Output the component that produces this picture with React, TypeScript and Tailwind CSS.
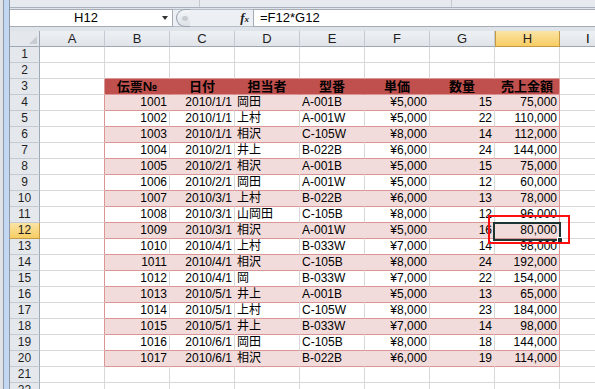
import React from "react";

type Row = [string, string, string, string, string, string, string];

const DATA: Row[] = [
  ["1001", "2010/1/1", "岡田", "A-001B", "¥5,000", "15", "75,000"],
  ["1002", "2010/1/1", "上村", "A-001W", "¥5,000", "22", "110,000"],
  ["1003", "2010/1/1", "相沢", "C-105W", "¥8,000", "14", "112,000"],
  ["1004", "2010/2/1", "井上", "B-022B", "¥6,000", "24", "144,000"],
  ["1005", "2010/2/1", "相沢", "A-001B", "¥5,000", "15", "75,000"],
  ["1006", "2010/2/1", "岡田", "A-001W", "¥5,000", "12", "60,000"],
  ["1007", "2010/3/1", "上村", "B-022B", "¥6,000", "13", "78,000"],
  ["1008", "2010/3/1", "山岡田", "C-105B", "¥8,000", "12", "96,000"],
  ["1009", "2010/3/1", "相沢", "A-001W", "¥5,000", "16", "80,000"],
  ["1010", "2010/4/1", "上村", "B-033W", "¥7,000", "14", "98,000"],
  ["1011", "2010/4/1", "相沢", "C-105B", "¥8,000", "24", "192,000"],
  ["1012", "2010/4/1", "岡", "B-033W", "¥7,000", "22", "154,000"],
  ["1013", "2010/5/1", "井上", "A-001B", "¥5,000", "13", "65,000"],
  ["1014", "2010/5/1", "上村", "C-105W", "¥8,000", "23", "184,000"],
  ["1015", "2010/5/1", "井上", "B-033W", "¥7,000", "14", "98,000"],
  ["1016", "2010/6/1", "岡田", "C-105B", "¥8,000", "18", "144,000"],
  ["1017", "2010/6/1", "相沢", "B-022B", "¥6,000", "19", "114,000"],
];

const HEADERS = ["伝票№", "日付", "担当者", "型番", "単価", "数量", "売上金額"];
const COLS = ["A", "B", "C", "D", "E", "F", "G", "H"];
// alignment for B..H data: right, right, left, left, right, right, right
const ALIGN = ["justify-end", "justify-end", "justify-start", "justify-start", "justify-end", "justify-end", "justify-end"];

function TableCell({ r, ci }: { r: number; ci: number }) {
  // ci: 0..6 for B..H
  const isHeader = r === 3;
  const pinkRow = r % 2 === 0;
  const isLast = ci === 6;
  let bg = "bg-white";
  let br = "border-r-[#d8d8d8]";
  if (isHeader) {
    bg = "bg-[#c0504d]";
    br = "border-r-[#c0504d]";
  } else if (pinkRow) {
    bg = "bg-[#f2dcdb]";
    br = "border-r-[#f2dcdb]";
  }
  if (isLast) br = "border-r-[#da9694]";
  const text = isHeader ? HEADERS[ci] : DATA[r - 4][ci];
  const align = isHeader ? "justify-center" : ALIGN[ci];
  return (
    <div
      className={`w-[65px] h-[16px] shrink-0 border-r border-b border-b-[#da9694] ${br} ${bg} flex items-end ${align} px-[2px] overflow-hidden`}
    >
      <span
        className={`whitespace-nowrap leading-[15px] ${isHeader ? "text-[13px] font-bold text-black" : "text-[12px] text-black"}`}
      >
        {text}
      </span>
    </div>
  );
}

function GridRow({ r }: { r: number }) {
  const selected = r === 12;
  const inTable = r >= 3 && r <= 20;
  return (
    <div className="flex h-[16px]">
      <div
        className={`w-[30px] h-[16px] shrink-0 border-b border-r flex items-end justify-center text-[12px] leading-[15px] ${
          selected
            ? "bg-gradient-to-b from-[#fbe4a4] to-[#f7cd62] border-b-[#c59a45] border-r-[#c59a45]"
            : "bg-[#e4e8ed] border-b-[#c4cad2] border-r-[#9ea8b5]"
        } text-[#1f1f1f]`}
      >
        {r}
      </div>
      <div
        className={`w-[65px] h-[16px] shrink-0 bg-white border-b border-b-[#d8d8d8] border-r ${
          inTable ? "border-r-[#da9694]" : "border-r-[#d8d8d8]"
        }`}
      />
      {Array.from({ length: 7 }).map((_, ci) =>
        inTable ? (
          <TableCell key={ci} r={r} ci={ci} />
        ) : (
          <div
            key={ci}
            className={`w-[65px] h-[16px] shrink-0 bg-white border-r border-b border-r-[#d8d8d8] ${
              r === 2 ? "border-b-[#da9694]" : "border-b-[#d8d8d8]"
            }`}
          />
        )
      )}
      <div className="flex-1 h-[16px] bg-white border-b border-b-[#d8d8d8]" />
    </div>
  );
}

export default function App() {
  const rows = Array.from({ length: 22 }, (_, i) => i + 1);
  return (
    <div className="w-[595px] h-[389px] overflow-hidden relative flex bg-[#dfe4ea] font-['Liberation_Sans','Noto_Sans_CJK_JP',sans-serif] text-black">
      {/* left chrome */}
      <div className="w-[10px] h-full shrink-0 flex">
        <div className="w-[3px] h-full bg-[#dfe3e8]" />
        <div className="w-[1px] h-full bg-[#8e99a8]" />
        <div className="w-[5px] h-full bg-[#c3d7f0]" />
        <div className="w-[1px] h-full bg-[#8e99a8]" />
      </div>
      <div className="flex-1 flex flex-col min-w-0">
        {/* top strip */}
        <div className="h-[8px] shrink-0 flex bg-[#e6eaef] border-b border-b-[#a9b1bc]">
          <div className="w-[190px] border-r border-r-[#c3c9d1]" />
          <div className="w-[252px] border-r border-r-[#c3c9d1]" />
          <div className="flex-1" />
        </div>
        {/* formula bar */}
        <div className="h-[23px] shrink-0 flex items-start pt-[1px] bg-[#dfe4ea]">
          <div className="w-[163px] h-[18px] bg-white border border-[#a5acb6] border-l-0 flex items-center">
            <div className="flex-1 text-center text-[13px] leading-[16px] pl-[4px]">H12</div>
            <div className="w-[14px] flex items-center justify-center">
              <div className="w-0 h-0 border-l-[3.5px] border-r-[3.5px] border-t-[4px] border-l-transparent border-r-transparent border-t-[#333]" />
            </div>
          </div>
          <div className="w-[80px] h-[18px] bg-[#eceff3] border-y border-[#b8bec7] flex items-center">
            <div className="w-[14px] h-[18px] ml-[3px] rounded-l-full border border-r-0 border-[#9aa3ae] bg-gradient-to-b from-[#f4f6f8] to-[#dde2e8] flex items-center justify-center">
              <div className="w-[6px] h-[5px] rounded-full bg-[#c8cdd3] ml-[2px]" />
            </div>
            <div className="flex-1" />
            <div className="mr-[4px] font-['Liberation_Serif',serif] italic font-bold text-[13px] leading-[14px] text-[#222]">
              f<span className="text-[9px]">x</span>
            </div>
          </div>
          <div className="flex-1 h-[18px] bg-white border border-[#a5acb6] border-r-0 flex items-center pl-[6px] text-[13px] leading-[16px]">
            =F12*G12
          </div>
        </div>
        {/* column headers */}
        <div className="flex h-[16px] shrink-0">
          <div className="w-[30px] h-[16px] bg-[#e4e8ed] border-b border-r border-b-[#9ea8b5] border-r-[#9ea8b5] relative">
            <div className="absolute right-[2px] bottom-[2px] w-0 h-0 border-l-[8px] border-t-[8px] border-l-transparent border-t-transparent border-r-0 border-b-0" style={{}} />
            <div className="absolute right-[2px] bottom-[2px] w-0 h-0 border-b-[8px] border-l-[8px] border-b-[#c7ccd3] border-l-transparent" />
          </div>
          {COLS.map((c) => (
            <div
              key={c}
              className={`w-[65px] h-[16px] shrink-0 border-b border-r flex items-end justify-center text-[13px] leading-[15px] ${
                c === "H"
                  ? "bg-gradient-to-b from-[#fbe4a4] to-[#f7cd62] border-b-[#c59a45] border-r-[#c59a45] border-l border-l-[#c59a45]"
                  : "bg-gradient-to-b from-[#eef1f4] to-[#e0e4e9] border-b-[#9ea8b5] border-r-[#c4cad2]"
              } text-[#1f1f1f]`}
            >
              {c}
            </div>
          ))}
          <div className="flex-1 h-[16px] bg-gradient-to-b from-[#eef1f4] to-[#e0e4e9] border-b border-b-[#9ea8b5] pl-[26px] text-[13px] leading-[15px] flex items-end">
            I
          </div>
        </div>
        {/* grid rows */}
        <div className="flex flex-col">
          {rows.map((r) => (
            <GridRow key={r} r={r} />
          ))}
        </div>
      </div>
      {/* selection box */}
      <div className="absolute left-[493px] top-[222px] w-[68px] h-[19px] border-2 border-[#1c3532]" />
      <div className="absolute left-[557px] top-[237px] w-[6px] h-[6px] bg-[#1c3532] border border-white" />
      {/* red annotation box */}
      <div className="absolute left-[488px] top-[215px] w-[82px] h-[29px] border-2 border-[#ff1010]" />
    </div>
  );
}
